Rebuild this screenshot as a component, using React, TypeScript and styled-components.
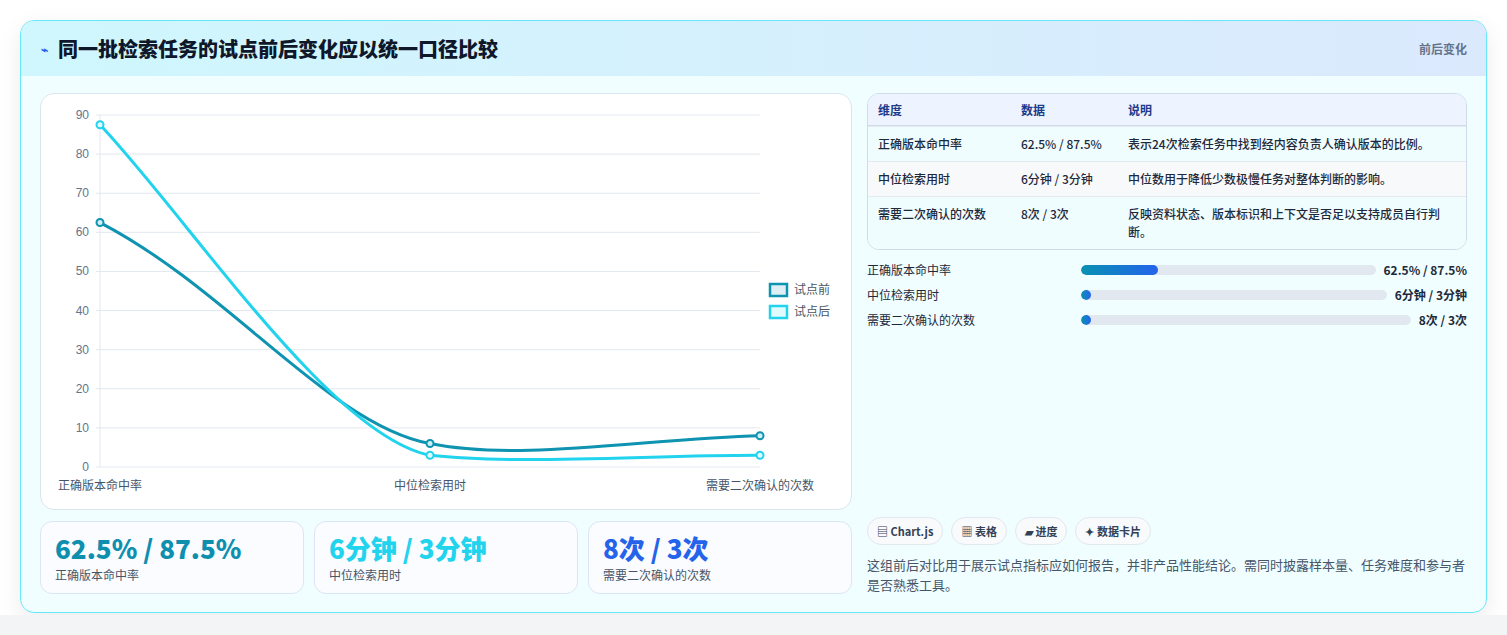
import React from "react";
import styled, { createGlobalStyle } from "styled-components";

const G = createGlobalStyle`
  body{margin:0;background:#f3f4f6;font-family:"Noto Sans CJK SC","Noto Sans",sans-serif;}
`;
const Page = styled.div`padding:20px 20px 0 20px;height:615px;box-sizing:border-box;background:#fff;`;
const Card = styled.div`border:1px solid #67e8f9;border-radius:14px;overflow:hidden;background:#f0feff;box-shadow:0 8px 24px rgba(0,0,0,.08);height:593px;box-sizing:border-box;display:flex;flex-direction:column;`;
const Head = styled.div`height:55px;flex:none;display:flex;align-items:center;justify-content:space-between;padding:0 19px 0 20px;background:linear-gradient(90deg,#cff7fd,#dbe9fd);`;
const Title = styled.h1`margin:0;font-size:20px;font-weight:900;color:#0f172a;display:flex;align-items:center;gap:10px;`;
const Tag = styled.span`font-size:12px;font-weight:700;color:#64748b;`;
const Body = styled.div`display:grid;grid-template-columns:812px 600px;gap:15px;padding:17px 19px 0 19px;`;
const Col = styled.div`display:flex;flex-direction:column;`;
const ChartBox = styled.div`height:417px;box-sizing:border-box;border:1px solid #dbe5f0;border-radius:14px;background:#fff;overflow:hidden;`;
const Kpis = styled.div`display:grid;grid-template-columns:repeat(3,1fr);gap:10px;margin-top:11px;`;
const Kpi = styled.div`height:73px;box-sizing:border-box;border:1px solid #dbe6f5;border-radius:12px;background:#fafcff;padding:9px 14px;`;
const KNum = styled.div<{c:string}>`font-size:26px;font-weight:900;color:${p=>p.c};line-height:34px;`;
const KLab = styled.div`font-size:12px;color:#475569;margin-top:1px;`;
const Table = styled.table`width:100%;border-collapse:separate;border-spacing:0;border:1px solid #cfdbe8;border-radius:12px;overflow:hidden;font-size:12px;color:#1e293b;`;
const Th = styled.th`text-align:left;background:#eef4ff;color:#1e3a8a;font-weight:700;height:31px;padding:0 10px;border-bottom:1px solid #cfdbe8;`;
const Td = styled.td<{alt?:boolean}>`padding:8px 10px;vertical-align:top;line-height:18px;font-weight:500;background:${p=>p.alt?"#f8f9fb":"#f0fdff"};border-top:1px solid #e5eaf0;`;
const Bars = styled.div`display:flex;flex-direction:column;gap:6px;margin-top:10px;`;
const BarRow = styled.div`display:grid;grid-template-columns:206px 1fr auto;align-items:center;gap:8px;font-size:12px;color:#1e293b;height:19px;`;
const Track = styled.div`height:10px;border-radius:5px;background:#e2e8f0;overflow:hidden;`;
const Fill = styled.div`height:100%;border-radius:5px;background:linear-gradient(90deg,#0891b2,#2563eb);min-width:10px;`;
const Val = styled.b`font-weight:700;`;
const Chips = styled.div`display:flex;gap:8px;margin-top:188px;`;
const Chip = styled.span`font-size:11px;font-weight:700;color:#334155;background:#f8fafc;border:1px solid #e2e8f0;border-radius:14px;padding:5px 9px;`;
const Note = styled.p`margin:10px 0 0;font-size:13px;line-height:20px;color:#475569;`;

const ys=(v:number)=>467-v*352/90;
const Chart=()=>(
  <svg width="810" height="415" viewBox="41 94 810 415" fontFamily="Liberation Sans, Noto Sans CJK SC, sans-serif">
    {[0,10,20,30,40,50,60,70,80,90].map(v=>(
      <g key={v}>
        <line x1="96" x2="760" y1={ys(v)} y2={ys(v)} stroke="#e2e8f0"/>
        <text x="89" y={ys(v)+4} fontSize="12" fill="#64748b" textAnchor="end">{v}</text>
      </g>
    ))}
    <line x1="100" x2="100" y1="115" y2="467" stroke="#e2e8f0"/>
    {[["正确版本命中率",100],["中位检索用时",430],["需要二次确认的次数",760]].map(([t,x])=>(
      <text key={t as string} x={x as number} y="490" fontSize="12" fill="#475569" textAnchor="middle" fontFamily="Noto Sans CJK SC">{t}</text>
    ))}
    <path d={`M100,${ys(62.5)} C230,290 330,425 430,${ys(6)} C520,462 650,438 760,${ys(8)}`} fill="none" stroke="#0e93b0" strokeWidth="3"/>
    <path d={`M100,${ys(87.5)} C190,220 330,435 430,${ys(3)} C520,465 650,455 760,${ys(3)}`} fill="none" stroke="#22d3ee" strokeWidth="3"/>
    {[[100,62.5],[430,6],[760,8]].map(([x,v])=><circle key={x} cx={x} cy={ys(v)} r="3.5" fill="#cdeff5" stroke="#0e93b0" strokeWidth="2"/>)}
    {[[100,87.5],[430,3],[760,3]].map(([x,v])=><circle key={x} cx={x} cy={ys(v)} r="3.5" fill="#e0fbff" stroke="#22d3ee" strokeWidth="2"/>)}
    <rect x="770" y="284" width="17" height="12" fill="#ddeff5" stroke="#0e93b0" strokeWidth="2.5"/>
    <text x="794" y="294" fontSize="12" fill="#4b5563" fontFamily="Noto Sans CJK SC">试点前</text>
    <rect x="770" y="306" width="17" height="12" fill="#e0fbff" stroke="#22d3ee" strokeWidth="2.5"/>
    <text x="794" y="316" fontSize="12" fill="#4b5563" fontFamily="Noto Sans CJK SC">试点后</text>
  </svg>
);

export default function App(){
  const rows=[["正确版本命中率","62.5% / 87.5%","表示24次检索任务中找到经内容负责人确认版本的比例。"],["中位检索用时","6分钟 / 3分钟","中位数用于降低少数极慢任务对整体判断的影响。"],["需要二次确认的次数","8次 / 3次","反映资料状态、版本标识和上下文是否足以支持成员自行判断。"]];
  const bars:[string,string,number][]=[["正确版本命中率","62.5% / 87.5%",26],["中位检索用时","6分钟 / 3分钟",0],["需要二次确认的次数","8次 / 3次",0]];
  return(<><G/><Page><Card>
    <Head><Title><span style={{color:"#2563eb",fontSize:12}}>⌁</span>同一批检索任务的试点前后变化应以统一口径比较</Title><Tag>前后变化</Tag></Head>
    <Body>
      <Col>
        <ChartBox><Chart/></ChartBox>
        <Kpis>
          <Kpi><KNum c="#0e8fae">62.5% / 87.5%</KNum><KLab>正确版本命中率</KLab></Kpi>
          <Kpi><KNum c="#22d3ee">6分钟 / 3分钟</KNum><KLab>中位检索用时</KLab></Kpi>
          <Kpi><KNum c="#2563eb">8次 / 3次</KNum><KLab>需要二次确认的次数</KLab></Kpi>
        </Kpis>
      </Col>
      <Col>
        <Table>
          <thead><tr><Th style={{width:123}}>维度</Th><Th style={{width:87}}>数据</Th><Th>说明</Th></tr></thead>
          <tbody>{rows.map((r,i)=><tr key={i}>{r.map((c,j)=><Td key={j} alt={i===1}>{c}</Td>)}</tr>)}</tbody>
        </Table>
        <Bars>{bars.map(([l,v,w])=><BarRow key={l}><span>{l}</span><Track><Fill style={{width:`${w}%`}}/></Track><Val>{v}</Val></BarRow>)}</Bars>
        <Chips><Chip>▤ Chart.js</Chip><Chip>▦ 表格</Chip><Chip>▰ 进度</Chip><Chip>✦ 数据卡片</Chip></Chips>
        <Note>这组前后对比用于展示试点指标应如何报告，并非产品性能结论。需同时披露样本量、任务难度和参与者是否熟悉工具。</Note>
      </Col>
    </Body>
  </Card></Page></>);
}
